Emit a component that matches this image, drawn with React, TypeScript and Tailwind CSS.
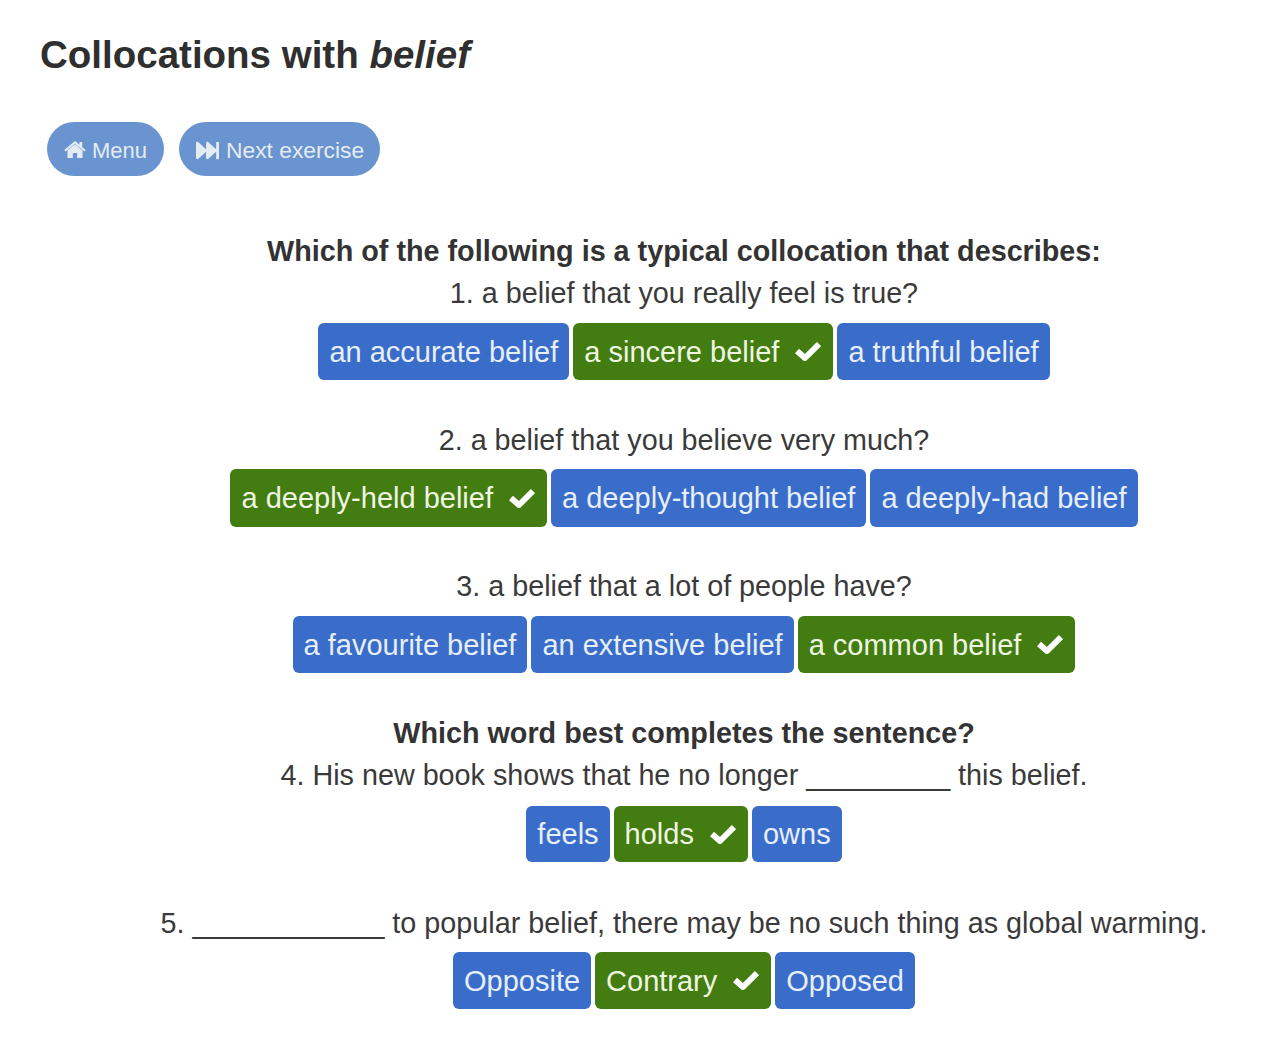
import { FC } from "react";
import { FaFastForward } from "react-icons/fa";

type Choice = { label: string; correct?: boolean };
type Question = { text: string; choices: Choice[]; mt: string; rowMt: string; rowH: string };

// the old FontAwesome 4 house, the one in the package has no chimney notch
const HomeIcon: FC = () => (
  <svg viewBox="0 0 24 20" className="h-[18px] w-[22px]" fill="currentColor">
    <path d="M12 3.6 3.6 10.6V18c0 .6.4 1 1 1h5v-5.6h4.8V19h5c.6 0 1-.4 1-1v-7.4z" />
    <path d="M12 0 0 10l1.5 1.8L12 3.1l10.5 8.7L24 10l-4-3.4V1h-3v3.1z" />
  </svg>
);

// heavier than FaCheck, same weight as the FA4 tick
const CheckIcon: FC = () => (
  <svg viewBox="0 0 26 20" className="ml-4 -mt-[3px] h-[20px] w-[26px] text-white" fill="none" stroke="currentColor">
    <path d="M2 10l8 7L24 3" strokeWidth="6" strokeLinejoin="round" />
  </svg>
);

const ChoiceButton: FC<Choice & { rowH: string }> = ({ label, correct, rowH }) => (
  <span
    className={`flex items-center rounded-[6px] pl-[11px] pt-[2px] text-[29px] whitespace-nowrap ${rowH} ${
      correct ? "bg-[#437c10] pr-[12px] text-[#eef6e2]" : "bg-[#3a6dca] pr-[11px] text-[#e6effb]"
    }`}
  >
    {label}
    {correct && <CheckIcon />}
  </span>
);

const Row: FC<{ q: Question }> = ({ q }) => (
  <div className={q.mt}>
    <p className="pb-[2px] text-center text-[28.75px] leading-[32px] text-[#3a3a3a] whitespace-nowrap">{q.text}</p>
    <div className={`flex justify-center gap-[4px] ${q.rowMt}`}>
      {q.choices.map((c) => (
        <ChoiceButton key={c.label} {...c} rowH={q.rowH} />
      ))}
    </div>
  </div>
);

const first: Question[] = [
  {
    text: "1. a belief that you really feel is true?",
    mt: "mt-[8px]",
    rowMt: "mt-[12px]",
    rowH: "h-[57px]",
    choices: [{ label: "an accurate belief" }, { label: "a sincere belief", correct: true }, { label: "a truthful belief" }],
  },
  {
    text: "2. a belief that you believe very much?",
    mt: "mt-[44px]",
    rowMt: "mt-[11px]",
    rowH: "h-[58px]",
    choices: [{ label: "a deeply-held belief", correct: true }, { label: "a deeply-thought belief" }, { label: "a deeply-had belief" }],
  },
  {
    text: "3. a belief that a lot of people have?",
    mt: "mt-[43px]",
    rowMt: "mt-[12px]",
    rowH: "h-[57px]",
    choices: [{ label: "a favourite belief" }, { label: "an extensive belief" }, { label: "a common belief", correct: true }],
  },
];

const second: Question[] = [
  {
    text: "4. His new book shows that he no longer _________ this belief.",
    mt: "mt-[8px]",
    rowMt: "mt-[13px]",
    rowH: "h-[56px]",
    choices: [{ label: "feels" }, { label: "holds", correct: true }, { label: "owns" }],
  },
  {
    text: "5. ____________ to popular belief, there may be no such thing as global warming.",
    mt: "mt-[45px]",
    rowMt: "mt-[11px]",
    rowH: "h-[57px]",
    choices: [{ label: "Opposite" }, { label: "Contrary", correct: true }, { label: "Opposed" }],
  },
];

export default function App() {
  return (
    <div className="h-[1039px] w-[1280px] overflow-hidden bg-white font-['Liberation_Sans',Arial,sans-serif]">
      <h1 className="pl-[40px] pt-[33px] text-[38.5px] font-bold leading-[44px] text-[#2f2f2f]">
        Collocations with <em>belief</em>
      </h1>
      <div className="ml-[47px] mt-[45px] flex gap-[15px]">
        <span className="flex h-[54px] items-center gap-[6px] rounded-[27px] bg-[#6a94cf] pl-[17px] pr-[17px] pt-[2px] text-[22px] text-[#e4ebf3]">
          <HomeIcon /> Menu
        </span>
        <span className="flex h-[54px] items-center gap-[7px] rounded-[27px] bg-[#6a94cf] pl-[17px] pr-[16px] pt-[2px] text-[22.8px] text-[#e4ebf3]">
          <FaFastForward className="text-[23px]" /> Next exercise
        </span>
      </div>
      <div className="ml-[87px] w-[1194px]">
        <h2 className="mt-[59px] pb-[2px] text-center text-[28.75px] font-bold leading-[32px] text-[#333]">
          Which of the following is a typical collocation that describes:
        </h2>
        {first.map((q) => (
          <Row key={q.text} q={q} />
        ))}
        <h2 className="mt-[44px] pb-[2px] text-center text-[28.75px] font-bold leading-[32px] text-[#333]">
          Which word best completes the sentence?
        </h2>
        {second.map((q) => (
          <Row key={q.text} q={q} />
        ))}
      </div>
    </div>
  );
}
